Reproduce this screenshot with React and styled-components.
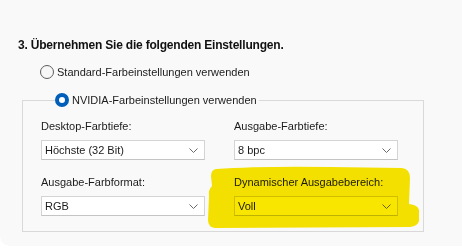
import React from 'react';
import styled, { createGlobalStyle } from 'styled-components';

const GlobalStyle = createGlobalStyle`
  html, body {
    margin: 0;
    padding: 0;
    background: #ffffff;
  }
  body {
    font-family: "Liberation Sans", Arial, sans-serif;
    font-size: 11px;
    color: #1a1a1a;
  }
`;

const Panel = styled.div`
  position: relative;
  width: 462px;
  height: 246px;
  box-sizing: border-box;
  background: #f9f9f9;
  border-bottom-left-radius: 10px;
  padding: 37px 38px 0 18px;
`;

const Heading = styled.h3`
  margin: 0 0 10px 0;
  font-size: 12px;
  font-weight: 700;
  letter-spacing: -0.2px;
  line-height: 16px;
  color: #111;
`;

const RadioRow = styled.label`
  display: flex;
  align-items: center;
  gap: 3px;
  height: 18px;
  margin-left: ${p => p.indent || 0}px;
  color: #1b1b1b;
  white-space: nowrap;
`;

const RadioDot = styled.span`
  box-sizing: border-box;
  width: 14px;
  height: 14px;
  border-radius: 50%;
  flex: none;
  background: ${p => (p.checked ? '#ffffff' : '#f7f7f7')};
  border: ${p => (p.checked ? '4px solid #005fb8' : '1px solid #5c5c5c')};
`;

const Group = styled.fieldset`
  margin: 10px 0 0 4px;
  padding: 9px 25px 15px 18px;
  border: 1px solid #d9d9d9;
  min-width: 0;
`;

const Legend = styled.legend`
  padding: 0 2px 0 0;
  margin-left: 14px;
`;

const Grid = styled.div`
  display: grid;
  grid-template-columns: 164px 164px;
  column-gap: 29px;
  row-gap: 14px;
`;

const Field = styled.div`
  display: flex;
  flex-direction: column;
  gap: 6px;
`;

const Label = styled.span`
  line-height: 16px;
  color: #1b1b1b;
  white-space: nowrap;
`;

const Select = styled.div`
  box-sizing: border-box;
  height: 20px;
  display: flex;
  align-items: center;
  justify-content: space-between;
  padding: 0 6px 0 3px;
  background: #ffffff;
  border: 1px solid #d4d4d4;
  border-bottom-color: #c4c4c4;
  color: #1b1b1b;
`;

const Highlight = styled.svg`
  position: absolute;
  left: 0;
  top: 0;
  pointer-events: none;
  mix-blend-mode: multiply;
`;

function Chevron() {
  return (
    <svg width="9" height="5" viewBox="0 0 9 5">
      <path d="M0.5 0.5 L4.5 4.5 L8.5 0.5" fill="none" stroke="#6a6a6a" strokeWidth="1" />
    </svg>
  );
}

function Dropdown({ value }) {
  return (
    <Select>
      <span>{value}</span>
      <Chevron />
    </Select>
  );
}

export default function App() {
  return (
    <>
      <GlobalStyle />
      <Panel>
        <Heading>3. Übernehmen Sie die folgenden Einstellungen.</Heading>
        <RadioRow indent={22}>
          <RadioDot />
          Standard-Farbeinstellungen verwenden
        </RadioRow>
        <Group>
          <Legend>
            <RadioRow>
              <RadioDot checked />
              NVIDIA-Farbeinstellungen verwenden
            </RadioRow>
          </Legend>
          <Grid>
            <Field>
              <Label>Desktop-Farbtiefe:</Label>
              <Dropdown value="Höchste (32 Bit)" />
            </Field>
            <Field>
              <Label>Ausgabe-Farbtiefe:</Label>
              <Dropdown value="8 bpc" />
            </Field>
            <Field>
              <Label>Ausgabe-Farbformat:</Label>
              <Dropdown value="RGB" />
            </Field>
            <Field>
              <Label>Dynamischer Ausgabebereich:</Label>
              <Dropdown value="Voll" />
            </Field>
          </Grid>
        </Group>
        <Highlight width="462" height="246" viewBox="0 0 462 246">
          <path
            d="M216 169 Q260 166 330 167 L402 168 Q410 169 410 178 L409 204 Q418 205 419 210 L419 221 Q418 226 410 227 L215 228 Q208 227 208 220 L209 196 Q208 190 212 186 L211 176 Q211 170 216 169 Z"
            fill="#f9e600"
          />
        </Highlight>
      </Panel>
    </>
  );
}
